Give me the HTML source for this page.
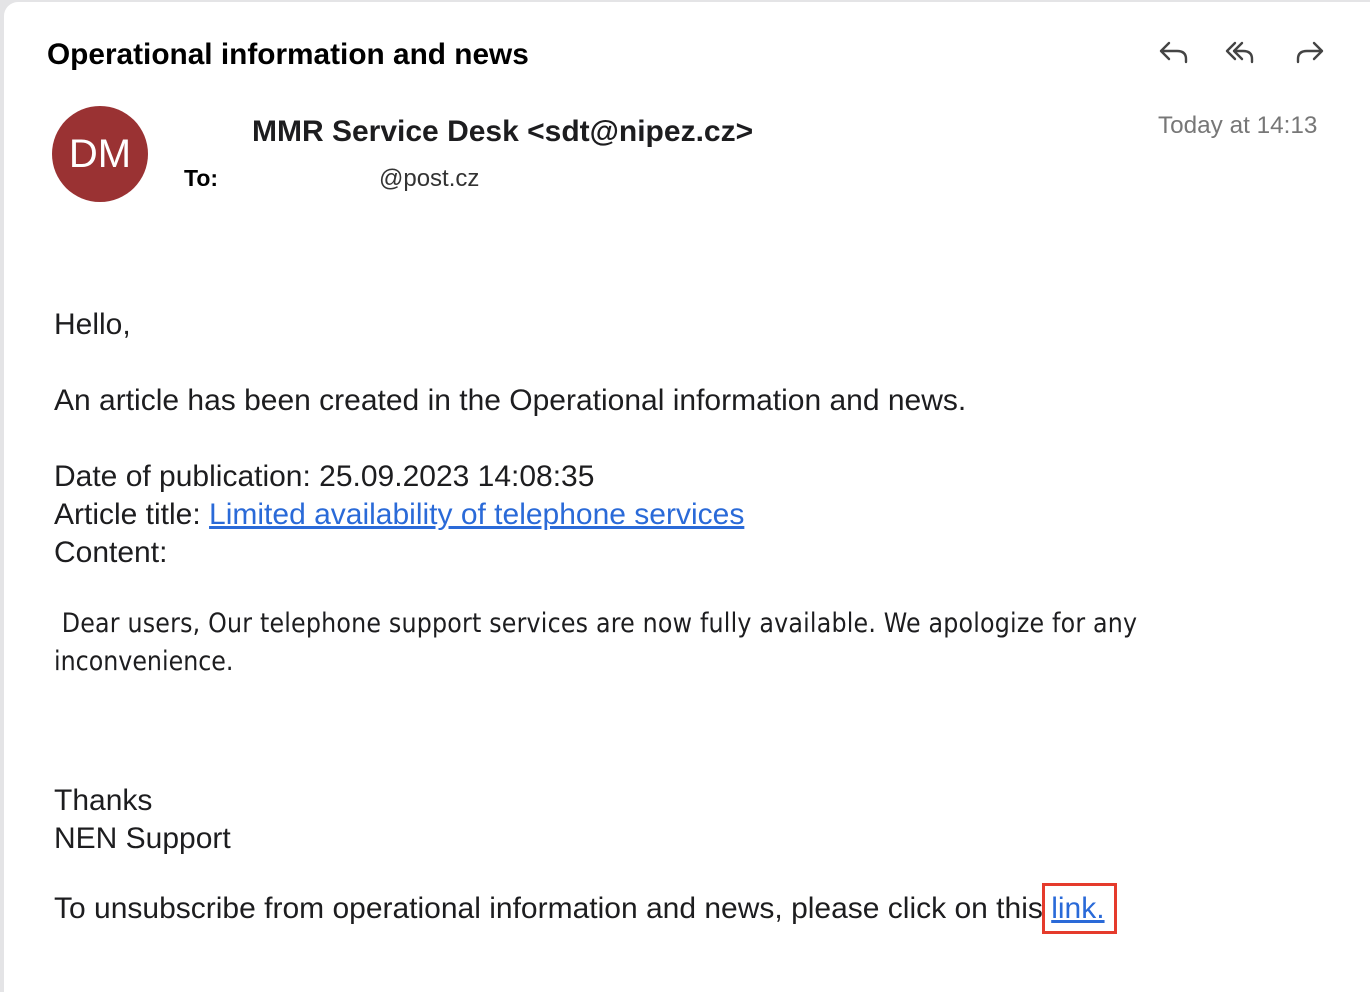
<!DOCTYPE html>
<html><head><meta charset="utf-8"><style>
html,body{margin:0;padding:0;width:1370px;height:984px;overflow:hidden;background:#e4e4e6;font-family:"Liberation Sans",sans-serif;}
.card{position:absolute;left:4px;top:2px;width:1366px;height:990px;background:#fff;border-radius:14px 0 0 0;}
.t{position:absolute;white-space:nowrap;color:#1d1d1f;}
a{color:#2a6ad8;text-decoration:underline;}
</style></head><body>
<div class="card"></div>
<div class="t" style="left:47px;top:38px;font-size:29.8px;font-weight:bold;color:#000;">Operational information and news</div>
<svg style="position:absolute;left:1155px;top:34px" width="175" height="40" viewBox="0 0 175 40" fill="none" stroke="#444" stroke-width="2.4" stroke-linecap="round" stroke-linejoin="round">
<path d="M14 9 L6 17 L14 25 M6 17 H22 Q31 17 31 25 V28"/>
<path d="M80 9 L72 17 L80 25 M87 9 L79 17 L87 25 M79 17 H88 Q97 17 97 25 V28"/>
<path d="M159 9 L167 17 L159 25 M167 17 H152 Q143 17 143 25 V28"/>
</svg>
<div style="position:absolute;left:52px;top:106px;width:96px;height:96px;border-radius:50%;background:#9a3233;color:#fff;font-size:40px;line-height:96px;text-align:center;">DM</div>
<div class="t" style="left:252px;top:115px;font-size:30px;font-weight:bold;color:#1d1d1f;">MMR Service Desk &lt;sdt@nipez.cz&gt;</div>
<div class="t" style="left:184px;top:165px;font-size:23px;font-weight:bold;color:#000;">To:</div>
<div class="t" style="left:379px;top:165px;font-size:24px;color:#333;">@post.cz</div>
<div class="t" style="left:1158px;top:112px;font-size:24.3px;color:#777;">Today at 14:13</div>
<div class="t" style="left:54px;top:308px;font-size:30px;">Hello,</div>
<div class="t" style="left:54px;top:384px;font-size:30px;">An article has been created in the Operational information and news.</div>
<div class="t" style="left:54px;top:460px;font-size:30px;">Date of publication: 25.09.2023 14:08:35</div>
<div class="t" style="left:54px;top:498px;font-size:30px;">Article title: <a>Limited availability of telephone services</a></div>
<div class="t" style="left:54px;top:536px;font-size:30px;">Content:</div>
<div class="t" style="left:54px;top:608px;font-size:26.4px;font-family:'DejaVu Sans Condensed','DejaVu Sans',sans-serif;letter-spacing:0.2px;">&nbsp;Dear users, Our telephone support services are now fully available. We apologize for any</div>
<div class="t" style="left:54px;top:646px;font-size:26.4px;font-family:'DejaVu Sans Condensed','DejaVu Sans',sans-serif;">inconvenience.</div>
<div class="t" style="left:54px;top:784px;font-size:30px;">Thanks</div>
<div class="t" style="left:54px;top:822px;font-size:30px;">NEN Support</div>
<div class="t" style="left:54px;top:892px;font-size:30px;">To unsubscribe from operational information and news, please click on this <a>link.</a></div>
<div style="position:absolute;left:1042px;top:883px;width:69px;height:45px;border:3px solid #e53b2c;"></div>
</body></html>
